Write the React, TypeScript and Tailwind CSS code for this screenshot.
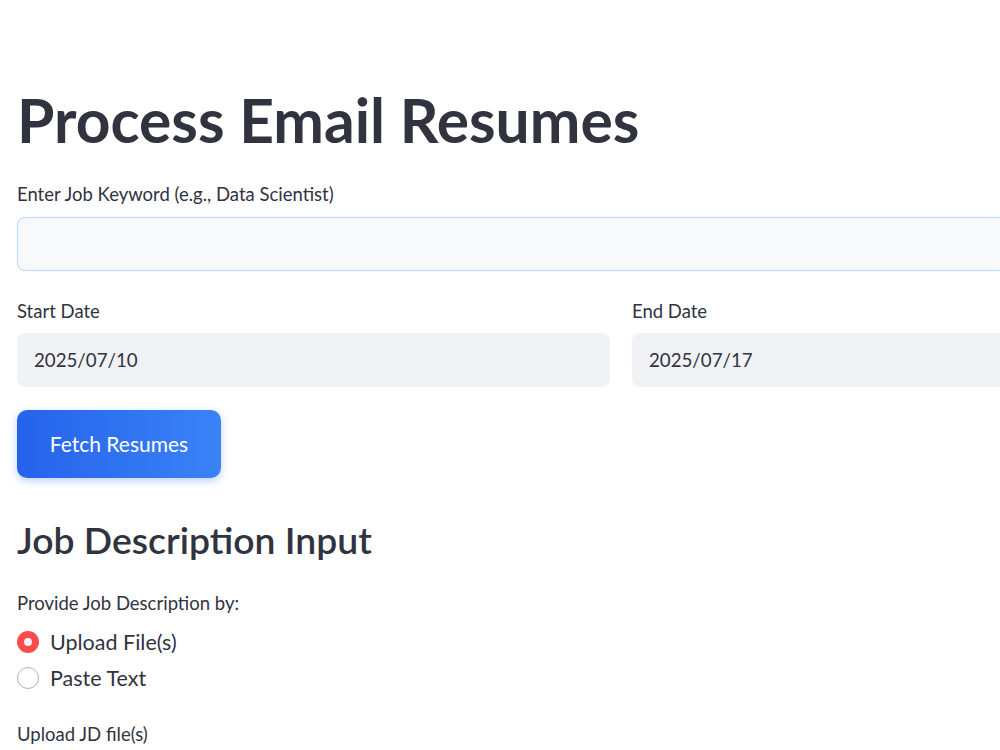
export default function App() {
  const font = { fontFamily: "Lato, 'Noto Sans', sans-serif" };
  return (
    <div className="w-full h-[750px] overflow-hidden bg-white text-[#31333F]" style={font}>
      <div className="w-[1225px] pl-[17px] pt-[84px] flex flex-col">
        <h1 className="text-[60.5px] font-bold leading-[72px]">Process Email Resumes</h1>
        <label className="mt-[26px] text-[18.5px] leading-[24px]">Enter Job Keyword (e.g., Data Scientist)</label>
        <div className="mt-[11px] h-[54px] w-full rounded-[8px] border border-[#b9d8fb] bg-[#f8f9fb]" />
        <div className="mt-[28px] grid grid-cols-2 gap-[22px]">
          <div className="flex flex-col">
            <span className="text-[18.5px] leading-[24px]">Start Date</span>
            <div className="mt-[10px] h-[54px] rounded-[8px] bg-[#f0f2f6] flex items-center px-[17px] text-[18.7px]">2025/07/10</div>
          </div>
          <div className="flex flex-col">
            <span className="text-[18.5px] leading-[24px]">End Date</span>
            <div className="mt-[10px] h-[54px] rounded-[8px] bg-[#f0f2f6] flex items-center px-[17px] text-[18.7px]">2025/07/17</div>
          </div>
        </div>
        <div className="mt-[23px]">
          <button className="h-[68px] w-[204px] rounded-[10px] bg-gradient-to-r from-[#2563eb] to-[#3b82f6] text-white text-[21px] shadow-[0_3px_8px_rgba(37,99,235,0.3)]">Fetch Resumes</button>
        </div>
        <h2 className="mt-[39px] text-[37.3px] font-semibold leading-[46px]">Job Description Input</h2>
        <span className="mt-[28px] text-[18.5px] leading-[24px]">Provide Job Description by:</span>
        <div className="mt-[11px] flex items-center gap-[11px] h-[32px]">
          <span className="w-[22px] h-[22px] rounded-full bg-[#ff4b4b] flex items-center justify-center">
            <span className="w-[8px] h-[8px] rounded-full bg-[#f0f2f6]" />
          </span>
          <span className="text-[21.5px]">Upload File(s)</span>
        </div>
        <div className="mt-[4px] flex items-center gap-[11px] h-[32px]">
          <span className="w-[22px] h-[22px] rounded-full border border-[#b3b5bc] bg-white" />
          <span className="text-[21.5px]">Paste Text</span>
        </div>
        <span className="mt-[28px] text-[18.5px] leading-[24px]">Upload JD file(s)</span>
      </div>
    </div>
  );
}
